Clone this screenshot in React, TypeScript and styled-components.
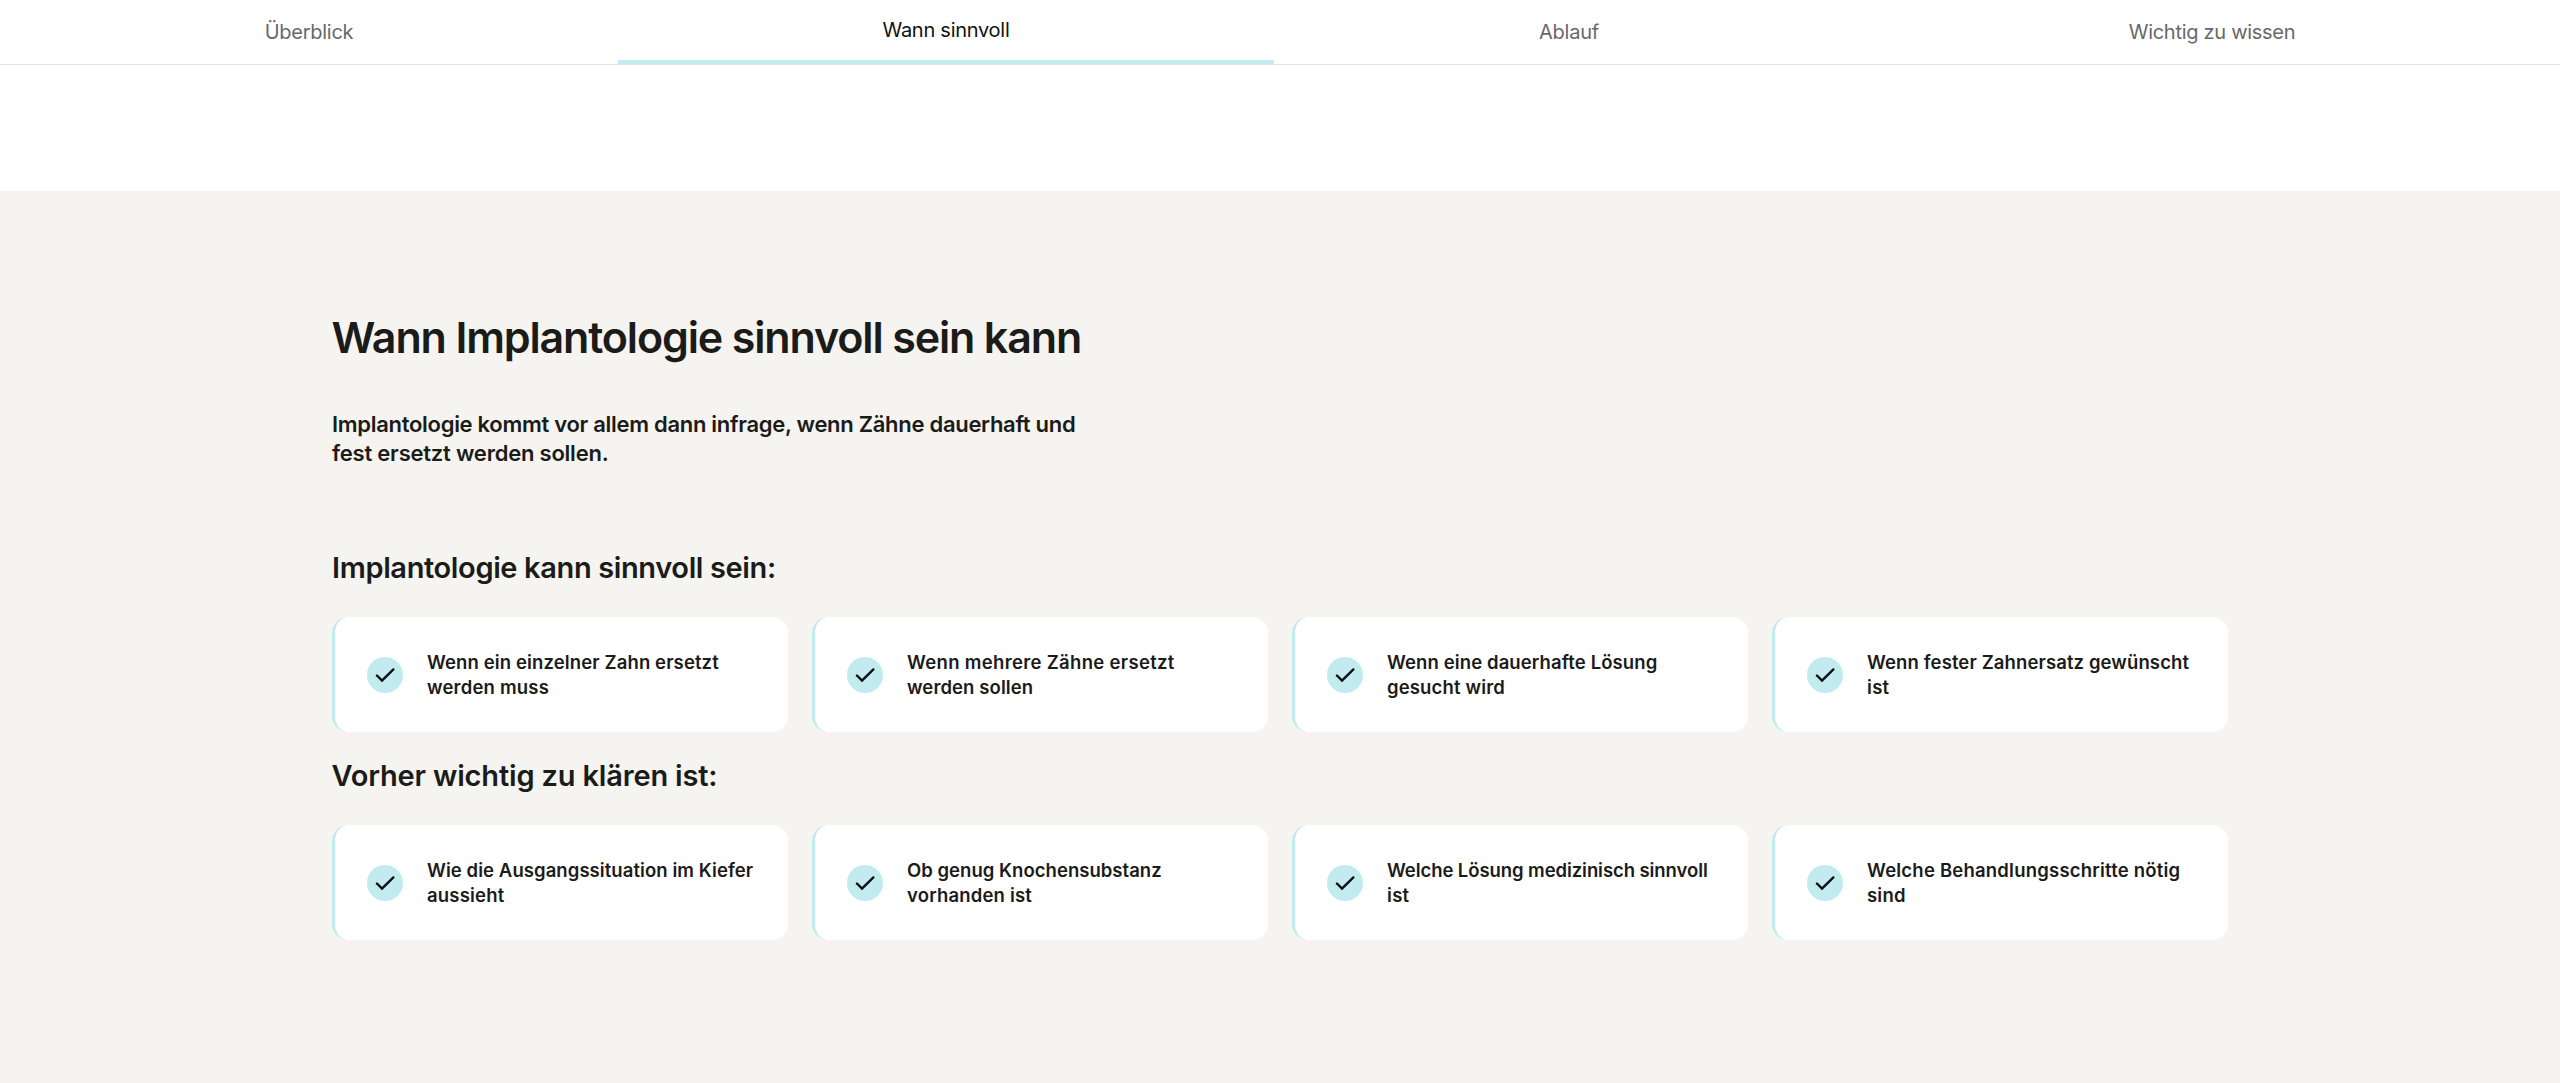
import React from 'react';
import styled, { createGlobalStyle } from 'styled-components';

const GlobalStyle = createGlobalStyle`
  *, *::before, *::after { box-sizing: border-box; }
  body {
    margin: 0;
    background: #fff;
    color: #1b1b19;
    font-family: Inter, "Liberation Sans", sans-serif;
  }
`;

const Page = styled.div`
  display: flex;
  flex-direction: column;
  min-height: 1083px;
`;

const TabBar = styled.nav`
  display: flex;
  height: 65px;
  margin-bottom: 126px;
  border-bottom: 1px solid #e4e5e5;
`;

const Tab = styled.a<{ $active?: boolean; $width: number; $tracking: number }>`
  display: flex;
  align-items: center;
  justify-content: center;
  flex: ${(p) => p.$width} 1 0;
  color: ${(p) => (p.$active ? '#111' : '#686868')};
  border-bottom: ${(p) => (p.$active ? '4px solid #c1ebee' : '0')};
  font-size: 20px;
  letter-spacing: ${(p) => p.$tracking}px;
  text-decoration: none;
  white-space: nowrap;
`;

const Section = styled.section`
  flex: 1;
  padding: 120px 332px 0;
  background: #f5f4f0;
`;

const Title = styled.h1`
  margin: 0;
  font-size: 43px;
  font-weight: 600;
  line-height: 52px;
  letter-spacing: -1.15px;
  text-indent: -0.5px;
`;

const Lead = styled.p`
  margin: 47px 0 82px;
  font-size: 22px;
  font-weight: 600;
  line-height: 29px;
`;

const Group = styled.div`
  margin-bottom: 26px;
`;

const GroupTitle = styled.h2<{ $tracking: number; $indent?: number }>`
  margin: 0 0 31px;
  font-size: 29px;
  font-weight: 600;
  line-height: 36px;
  letter-spacing: ${(p) => p.$tracking}px;
  text-indent: ${(p) => p.$indent ?? 0}px;
`;

const Cards = styled.div`
  display: grid;
  grid-template-columns: repeat(4, 1fr);
  gap: 24px;
`;

const Card = styled.article`
  display: flex;
  align-items: center;
  gap: 24px;
  height: 115px;
  padding: 0 24px 0 32px;
  background: #fff;
  border-left: 3px solid #c1ebee;
  border-radius: 16px;
`;

const Badge = styled.span`
  display: flex;
  flex: none;
  width: 36px;
  height: 36px;
  background: #c1ebee;
  border-radius: 50%;
`;

const CardText = styled.p`
  margin: 0;
  padding-top: 1px;
  font-size: 18.5px;
  font-weight: 600;
  line-height: 25.2px;
`;

const Line = styled.span<{ $tracking: number }>`
  display: block;
  letter-spacing: ${(p) => p.$tracking}px;
  white-space: nowrap;
`;

type TextLine = [text: string, tracking: number];

const tabs = [
  { label: 'Überblick', width: 618, tracking: -0.27 },
  { label: 'Wann sinnvoll', width: 656, tracking: -0.26, active: true },
  { label: 'Ablauf', width: 590, tracking: -0.2 },
  { label: 'Wichtig zu wissen', width: 696, tracking: -0.29 },
];

const lead: TextLine[] = [
  ['Implantologie kommt vor allem dann infrage, wenn Zähne dauerhaft und', -0.29],
  ['fest ersetzt werden sollen.', -0.22],
];

const groups: { title: string; tracking: number; indent?: number; cards: TextLine[][] }[] = [
  {
    title: 'Implantologie kann sinnvoll sein:',
    tracking: -0.37,
    cards: [
      [['Wenn ein einzelner Zahn ersetzt', 0.12], ['werden muss', 0.2]],
      [['Wenn mehrere Zähne ersetzt', 0.32], ['werden sollen', 0.1]],
      [['Wenn eine dauerhafte Lösung', 0.11], ['gesucht wird', 0.15]],
      [['Wenn fester Zahnersatz gewünscht', 0.11], ['ist', 0.3]],
    ],
  },
  {
    title: 'Vorher wichtig zu klären ist:',
    tracking: -0.17,
    indent: -0.6,
    cards: [
      [['Wie die Ausgangssituation im Kiefer', 0.07], ['aussieht', 0.18]],
      [['Ob genug Knochensubstanz', 0.03], ['vorhanden ist', 0.18]],
      [['Welche Lösung medizinisch sinnvoll', -0.08], ['ist', 0.3]],
      [['Welche Behandlungsschritte nötig', 0.21], ['sind', 0.2]],
    ],
  },
];

function Lines({ lines }: { lines: TextLine[] }) {
  return (
    <>
      {lines.map(([text, tracking]) => (
        <Line key={text} $tracking={tracking}>{text} </Line>
      ))}
    </>
  );
}

function CheckIcon() {
  return (
    <svg width="36" height="36" viewBox="0 0 36 36" fill="none" aria-hidden="true">
      <path d="M9.9 18.5 15 23.5 26.4 12.4" stroke="#0b0f10" strokeWidth="2.4" strokeLinecap="round" strokeLinejoin="miter" />
    </svg>
  );
}

export default function App() {
  return (
    <Page>
      <GlobalStyle />
      <TabBar>
        {tabs.map((tab) => (
          <Tab key={tab.label} $active={tab.active} $width={tab.width} $tracking={tab.tracking}>
            {tab.label}
          </Tab>
        ))}
      </TabBar>
      <Section>
        <Title>Wann Implantologie sinnvoll sein kann</Title>
        <Lead><Lines lines={lead} /></Lead>
        {groups.map((group) => (
          <Group key={group.title}>
            <GroupTitle $tracking={group.tracking} $indent={group.indent}>{group.title}</GroupTitle>
            <Cards>
              {group.cards.map((lines) => (
                <Card key={lines[0][0]}>
                  <Badge><CheckIcon /></Badge>
                  <CardText><Lines lines={lines} /></CardText>
                </Card>
              ))}
            </Cards>
          </Group>
        ))}
      </Section>
    </Page>
  );
}
